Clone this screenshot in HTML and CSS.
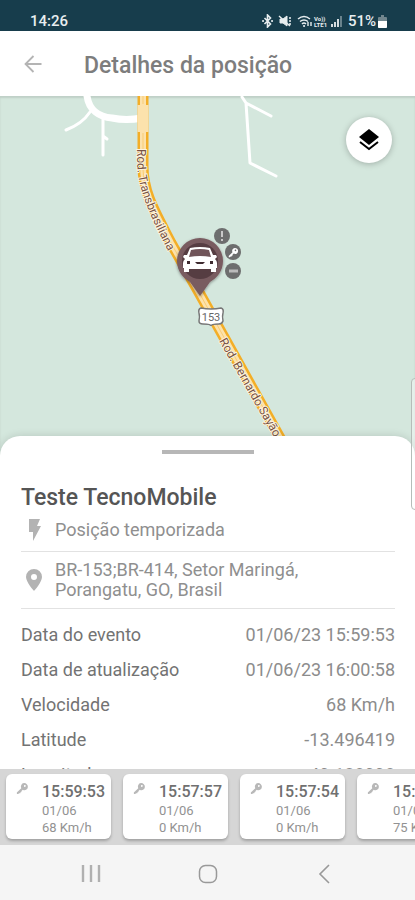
FILE: index.html
```html
<!DOCTYPE html>
<html lang="pt-BR">
<head>
    <meta charset="UTF-8">
    <meta name="viewport" content="width=device-width, initial-scale=1.0">
    <title>Detalhes da posição</title>
    <link rel="stylesheet" href="styles.css">
</head>
<body>
    <svg class="sprite" aria-hidden="true">
        <symbol id="key" viewBox="0 0 14 14">
            <path d="M8.5 1.2a4 4 0 0 1 4.3 4.3A3.6 3.6 0 0 1 7.3 8.3L5.7 9.9l.3 1-1.2.1-.2 1.1-1.2.1L2.3 13 1 12.9.9 11.4l4.8-4.8A3.7 3.7 0 0 1 8.5 1.2zM9.8 3.3a1 1 0 1 0 .1 1.9 1 1 0 0 0-.1-1.9z" fill="currentColor" fill-rule="evenodd"/>
        </symbol>
    </svg>

    <div class="page">
        <div class="status-bar">
            <span>14:26</span>
            <div class="status-icons">
                <svg width="80" height="14" viewBox="0 0 80 14" fill="none" stroke="#e8eef0" aria-hidden="true">
                    <!-- bluetooth -->
                    <path d="M2.5 4l6 6-3 3V1l3 3-6 6" stroke-width="1.6"/>
                    <path d="M1 7h.1M10 7h.1" stroke-width="2" stroke-linecap="round"/>
                    <!-- muted -->
                    <path d="M18 5h3l4-3v10l-4-3h-3z" fill="#e8eef0"/>
                    <path d="M17 2l11 10M27 4h2M27 7h2M27 10h2" stroke-width="1.4"/>
                    <!-- wifi -->
                    <path d="M36 5q6-5 12 0M38 7.500q4-3 8 0M40 10q2-2 4 0" stroke-width="1.5"/>
                    <path d="M42 12h.1" stroke-width="2" stroke-linecap="round"/>
                    <path d="M46 8v4M49 12V8" stroke-width="1.4"/>
                    <!-- signal -->
                    <path d="M70 13v-3M73 13V8M76 13V5" stroke-width="1.8"/>
                    <path d="M79 13V2" stroke-width="1.6" opacity=".5"/>
                    <text class="volte" x="52" y="7">Vo))</text>
                    <text class="volte" x="52" y="13">LTE1</text>
                </svg>
                <span>51%</span>
                <svg width="9" height="13" viewBox="0 0 9 13" aria-hidden="true">
                    <path d="M3 0h3v2h2q1 0 1 1v9q0 1-1 1H1q-1 0-1-1V3q0-1 1-1h2z" fill="#71868e"/>
                    <path d="M0 6h9v6q0 1-1 1H1q-1 0-1-1z" fill="#fff"/>
                </svg>
            </div>
        </div>

        <header class="header">
            <button type="button" class="btn-back" aria-label="Voltar">
                <svg width="18" height="18" viewBox="0 0 18 18" fill="none" stroke="#b4b4b4" stroke-width="1.8">
                    <path d="M17.500 9H1.500M9.500 1L1.500 9l8 8"/>
                </svg>
            </button>
            <h1>Detalhes da posição</h1>
        </header>

        <div class="map">
            <svg class="map-canvas" viewBox="0 0 415 360" preserveAspectRatio="xMidYMin slice" role="img" aria-label="Mapa">
                <defs>
                    <path id="road-north" d="M137 53V66C138 98 154 127 172 163"/>
                    <path id="road-south" d="M219 245L282 355"/>
                    <filter id="shadow" x="-30%" y="-30%" width="160%" height="160%">
                        <feDropShadow dx="0" dy="1" stdDeviation="1.5" flood-opacity=".4"/>
                    </filter>
                </defs>

                <!-- side roads -->
                <g fill="none" stroke="#fff" stroke-linecap="round" stroke-linejoin="round">
                    <path d="M87 0C89 14 99 21 112 22Q126 25 142 22" stroke-width="7"/>
                    <path d="M90 16Q82 28 66 34" stroke-width="3"/>
                    <path d="M103 22v37M103 40l4 3" stroke-width="3"/>
                    <path d="M242 1l4 6 4 60 26 13M246 7l25 13" stroke-width="3"/>
                </g>

                <!-- highway -->
                <g fill="none">
                    <path d="M143 0V70C143 97 155 116 171 147L201 200 290 360" stroke="#f3ae27" stroke-width="11"/>
                    <path d="M143 0V70C143 97 155 116 171 147L201 200 290 360" stroke="#fce2ac" stroke-width="6"/>
                    <path d="M143 9v27" stroke="#fce2ac" stroke-width="11"/>
                    <path d="M143 0v8M143 37V70C143 97 155 116 171 147L201 200 290 360" stroke="#f9cc75" stroke-width="1"/>
                </g>
                <text class="road-name"><textPath href="#road-north">Rod. Transbrasiliana</textPath></text>
                <text class="road-name"><textPath href="#road-south">Rod. Bernardo Sayão</textPath></text>

                <path d="M201 212q10 2 20 0 3 1 2 5-1 3 0 8-1 3-4 3-8 0-8 2 0-2-8-2-4 0-4-3 1-5 0-8-1-4 2-5z" fill="#fff" stroke="#777" stroke-width="1.500"/>
                <text class="shield" x="211" y="225" text-anchor="middle">153</text>

                <!-- vehicle pin -->
                <g filter="url(#shadow)">
                    <path d="M200 142a23 23 0 0 1 23 23c0 10-6 17-13 21l-10 14-10-14c-7-4-13-11-13-21a23 23 0 0 1 23-23z" fill="#795b60"/>
                    <circle cx="200" cy="165" r="18" fill="#563d42"/>
                </g>
                <path d="M190 152q10-2 20 0l3 7h3l1 2-2 2q2 2 2 4v5h-1v4h-5v-3h-22v3h-5v-4h-1v-5q0-2 2-4l-2-2 1-2h3z" fill="#fff"/>
                <path d="M191 154q9-2 18 0l2 7q-11-2-22 0z" fill="#705459"/>
                <path d="M187 165h3v3h-3zM210 165h3v3h-3zM195 166h10l-2 2h-6z" fill="#3f2b30"/>

                <g fill="#6d6e6e">
                    <circle cx="222" cy="140" r="8"/>
                    <circle cx="233" cy="156" r="8"/>
                    <circle cx="233" cy="175" r="8"/>
                </g>
                <path d="M222 135v6M222 143v2" stroke="#c9c9c9" stroke-width="2"/>
                <path d="M229 175h9" stroke="#bbb" stroke-width="3"/>
                <use href="#key" x="228" y="151" width="11" height="11" color="#fff"/>
            </svg>

            <button type="button" class="btn-layers" aria-label="Camadas">
                <svg width="20" height="22" viewBox="0 0 20 22">
                    <path d="M10 0l10 8-10 8L0 8z"/>
                    <path d="M1 13l9 7 9-7" fill="none" stroke="#000" stroke-width="2"/>
                </svg>
            </button>
        </div>

        <main class="sheet">
            <div class="handle"></div>
            <h2>Teste TecnoMobile</h2>
            <div class="info">
                <svg class="info-icon" width="26" height="24" viewBox="0 0 26 24" aria-hidden="true">
                    <path d="M8 1h11l-3 7h4L12 23v-9H8z" fill="#b3b3b3"/>
                </svg>
                <span>Posição temporizada</span>
            </div>
            <div class="info address">
                <svg class="info-icon" width="26" height="24" viewBox="0 0 26 24" aria-hidden="true">
                    <path d="M13 1a8 8 0 0 1 8 8c0 5-8 14-8 14S5 14 5 9a8 8 0 0 1 8-8zm0 5a3 3 0 1 0 0 6 3 3 0 0 0 0-6z" fill="#b3b3b3" fill-rule="evenodd"/>
                </svg>
                <span>BR-153;BR-414, Setor Maringá, Porangatu, GO, Brasil</span>
            </div>
            <table class="details">
                <tr><th scope="row">Data do evento</th><td>01/06/23 15:59:53</td></tr>
                <tr><th scope="row">Data de atualização</th><td>01/06/23 16:00:58</td></tr>
                <tr><th scope="row">Velocidade</th><td>68 Km/h</td></tr>
                <tr><th scope="row">Latitude</th><td>-13.496419</td></tr>
                <tr><th scope="row">Longitude</th><td>-49.138998</td></tr>
            </table>
        </main>

        <div class="history">
            <button type="button" class="card">
                <svg width="13" height="13" aria-hidden="true"><use href="#key"/></svg>
                <span class="card-text"><strong>15:59:53</strong><span>01/06</span><span>68 Km/h</span></span>
            </button>
            <button type="button" class="card">
                <svg width="13" height="13" aria-hidden="true"><use href="#key"/></svg>
                <span class="card-text"><strong>15:57:57</strong><span>01/06</span><span>0 Km/h</span></span>
            </button>
            <button type="button" class="card">
                <svg width="13" height="13" aria-hidden="true"><use href="#key"/></svg>
                <span class="card-text"><strong>15:57:54</strong><span>01/06</span><span>0 Km/h</span></span>
            </button>
            <button type="button" class="card">
                <svg width="13" height="13" aria-hidden="true"><use href="#key"/></svg>
                <span class="card-text"><strong>15:57:24</strong><span>01/06</span><span>75 Km/h</span></span>
            </button>
        </div>

        <nav class="nav-bar">
            <button type="button" aria-label="Recentes">
                <svg width="20" height="20" viewBox="0 0 20 20" stroke="#b0b0b0" stroke-width="2.400"><path d="M2 1v17M10 1v17M18 1v17"/></svg>
            </button>
            <button type="button" aria-label="Início">
                <svg width="20" height="20" viewBox="0 0 20 20" fill="none" stroke="#999" stroke-width="1.500"><rect x="1.500" y="1.500" width="17" height="17" rx="6"/></svg>
            </button>
            <button type="button" aria-label="Voltar">
                <svg width="20" height="20" viewBox="0 0 20 20" fill="none" stroke="#999" stroke-width="1.600"><path d="M15 1L6 10l9 9"/></svg>
            </button>
        </nav>

        <div class="edge-handle"></div>
    </div>
</body>
</html>
```
FILE: styles.css
```css
* {
    box-sizing: border-box;
}

body {
    margin: 0;
    font-family: Roboto, 'Liberation Sans', sans-serif;
    color: #666;
    background: #fff;
}

button {
    padding: 0;
    border: none;
    background: none;
    font-family: inherit;
    cursor: pointer;
}

svg {
    display: block;
}

.sprite {
    position: absolute;
    width: 0;
    height: 0;
}

.page {
    position: relative;
    display: flex;
    flex-direction: column;
    height: 100vh;
    overflow: hidden;
}

/* Top */
.status-bar {
    display: flex;
    flex-shrink: 0;
    justify-content: space-between;
    align-items: flex-end;
    height: 31px;
    padding: 0 28px 1px 30px;
    background: #173d4c;
    color: #e8eef0;
    font-size: 15px;
    font-weight: 500;
    line-height: 18px;
}

.status-icons {
    display: flex;
    align-items: center;
    gap: 6px;
}

.status-icons span {
    margin-right: -4px;
}

.volte {
    font-size: 6px;
    font-weight: 700;
    fill: #e8eef0;
    stroke: none;
}

.header {
    display: flex;
    flex-shrink: 0;
    align-items: center;
    gap: 42px;
    height: 65px;
    padding: 0 24px;
}

.header h1 {
    margin: 0;
    padding-top: 4px;
    color: #7d7d7d;
    font-size: 23px;
    font-weight: 500;
}

/* Map */
.map {
    position: relative;
    flex: 0 0 40vh;
    background: #d4e7dd;
    box-shadow: inset 0 2px 2px rgba(0, 0, 0, 0.1);
}

.map-canvas {
    width: 100%;
    height: 100%;
}

.road-name {
    fill: #795344;
    stroke: #fdf3df;
    stroke-width: 2px;
    paint-order: stroke;
    font-size: 12px;
}

.shield {
    fill: #666;
    font-size: 11px;
}

.btn-layers {
    position: absolute;
    top: 21px;
    right: 23px;
    display: flex;
    justify-content: center;
    align-items: center;
    width: 46px;
    height: 46px;
    border-radius: 50%;
    background: #fff;
    box-shadow: 0 1px 6px rgba(0, 0, 0, 0.25);
}

/* Bottom sheet */
.sheet {
    position: relative;
    flex: 1;
    min-height: 0;
    margin-top: -20px;
    padding: 14px 20px 0 21px;
    border-radius: 20px 20px 0 0;
    background: #fff;
    box-shadow: 0 0 8px rgba(0, 0, 0, 0.14);
    font-size: 18px;
    overflow: hidden;
}

.handle {
    width: 92px;
    height: 4px;
    margin: 0 auto;
    background: #b7b7b7;
}

.sheet h2 {
    margin: 29px 0 1px;
    color: #555;
    font-size: 23px;
    font-weight: 500;
    line-height: 30px;
}

.info {
    display: flex;
    align-items: center;
    gap: 8px;
    min-height: 38px;
    padding-bottom: 6px;
    border-bottom: 1px solid #e2e2e2;
    color: #8f8f8f;
    line-height: 20px;
}

.info-icon {
    flex-shrink: 0;
}

.address {
    min-height: 57px;
    padding: 8px 64px 8px 0;
}

.details {
    width: 100%;
    margin-top: 8px;
    border-collapse: collapse;
}

.details th,
.details td {
    height: 35px;
    padding: 0;
    font-weight: 400;
}

.details th {
    color: #737373;
    text-align: left;
}

.details td {
    color: #8c8c8c;
    text-align: right;
}

/* Position history */
.history {
    position: relative;
    display: flex;
    flex-shrink: 0;
    gap: 12px;
    padding: 5px 6px 6px;
    background: #d6d6d6;
    overflow: hidden;
}

.card {
    display: flex;
    flex: 0 0 105px;
    gap: 13px;
    height: 65px;
    padding: 8px 0 0 10px;
    border-radius: 6px;
    background: #fff;
    box-shadow: 0 2px 3px rgba(0, 0, 0, 0.25);
    color: #b8b8b8;
    text-align: left;
}

.card-text {
    display: flex;
    flex-direction: column;
    color: #929292;
    font-size: 13px;
    line-height: 17px;
}

.card-text strong {
    color: #707070;
    font-size: 16px;
    font-weight: 500;
    line-height: 20px;
}

/* System navigation */
.nav-bar {
    display: flex;
    flex-shrink: 0;
    justify-content: space-between;
    align-items: center;
    height: 55px;
    padding: 2px 81px 0;
    background: #f5f5f5;
}

.edge-handle {
    position: absolute;
    top: 42vh;
    right: -4px;
    width: 8px;
    height: 132px;
    border: 1px solid #b5bdb9;
    border-radius: 5px;
    background: rgba(255, 255, 255, 0.4);
}
```
